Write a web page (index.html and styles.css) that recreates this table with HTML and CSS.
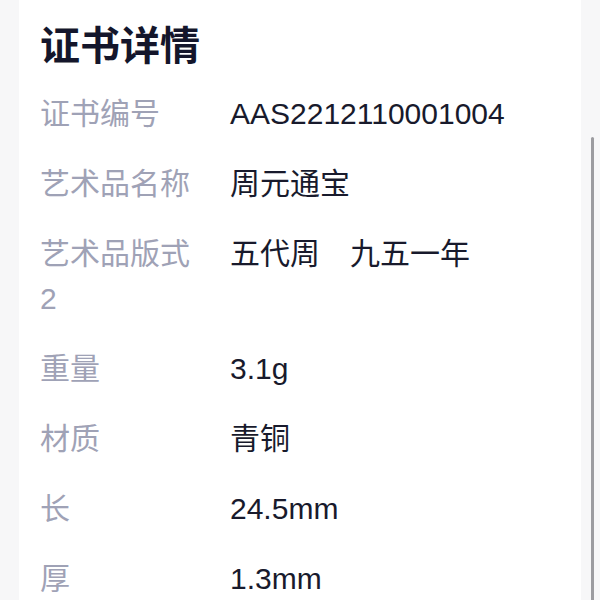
FILE: index.html
```html
<!DOCTYPE html>
<html lang="zh-CN">
<head>
    <meta charset="UTF-8">
    <meta name="viewport" content="width=device-width, initial-scale=1.0">
    <title>证书详情</title>
    <link rel="stylesheet" href="styles.css">
</head>
<body>
    <div class="page">
        <div class="detail-card">
            <h1 class="detail-title">证书详情</h1>
            <div class="detail-list">
                <div class="detail-label">证书编号</div>
                <div class="detail-value">AAS2212110001004</div>

                <div class="detail-label">艺术品名称</div>
                <div class="detail-value">周元通宝</div>

                <div class="detail-label">艺术品版式2</div>
                <div class="detail-value">五代周　九五一年</div>

                <div class="detail-label">重量</div>
                <div class="detail-value">3.1g</div>

                <div class="detail-label">材质</div>
                <div class="detail-value">青铜</div>

                <div class="detail-label">长</div>
                <div class="detail-value">24.5mm</div>

                <div class="detail-label">厚</div>
                <div class="detail-value">1.3mm</div>
            </div>
        </div>
        <!-- scroll indicator on the right gutter -->
        <div class="scroll-track">
            <div class="scroll-thumb"></div>
        </div>
    </div>
</body>
</html>
```

FILE: styles.css
```css
html, body {
    margin: 0;
    height: 100%;
}
body {
    background: #f7f7f8;
    font-family: "Liberation Sans", "Noto Sans CJK SC", sans-serif;
    overflow: hidden;
}
.page {
    display: flex;
    height: 100vh;
    padding-left: 19px;
}
.detail-card {
    background: #ffffff;
    width: 562px;
    flex: none;
    padding: 15px 0 0 21px;
    box-sizing: border-box;
}
.detail-title {
    margin: 0;
    font-family: "Noto Sans CJK SC", sans-serif;
    font-size: 40px;
    line-height: 56px;
    font-weight: 700;
    color: #14162b;
}
.detail-list {
    display: grid;
    grid-template-columns: 160px 1fr;
    column-gap: 30px;
    row-gap: 25px;
    margin-top: 20px;
    font-size: 30px;
    line-height: 45px;
}
.detail-label {
    color: #9fa2b6;
}
.detail-value {
    color: #181a2c;
    word-spacing: 2px;
}
.scroll-track {
    flex: 1;
    display: flex;
    flex-direction: column;
    padding-top: 137px;
}
.scroll-thumb {
    flex: 1;
    width: 3px;
    margin-left: 10px;
    background: #9c9ca0;
    border-radius: 2px 2px 0 0;
}
```
